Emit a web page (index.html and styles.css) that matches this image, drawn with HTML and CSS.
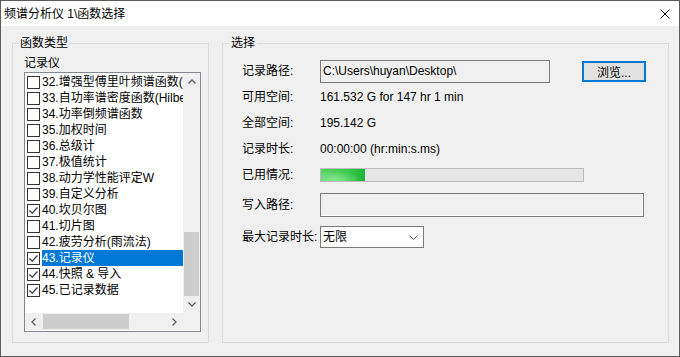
FILE: index.html
```html
<!DOCTYPE html>
<html lang="zh">
    <head>
        <meta charset="UTF-8">
        <title>频谱分析仪 1\函数选择</title>
        <link rel="stylesheet" href="styles.css">
    </head>
    <body>
        <div class="window">
            <div class="titlebar">
                <span class="title">频谱分析仪 1\函数选择</span>
                <svg class="close" width="10" height="10" viewBox="0 0 10 10">
                    <path d="M0.5 0.5 L9.5 9.5 M9.5 0.5 L0.5 9.5" stroke="#000" stroke-width="1" fill="none"/>
                </svg>
            </div>

            <div class="content">
                <!--left group-->
                <fieldset class="group group-left">
                    <legend>函数类型</legend>
                    <div class="list-label">记录仪</div>
                    <div class="listbox">
                        <div class="list-main">
                            <div class="rows">
                                <div class="item"><span class="check"></span><span class="text">32.增强型傅里叶频谱函数(Hilbert)</span></div>
                                <div class="item"><span class="check"></span><span class="text">33.自功率谱密度函数(Hilbert)</span></div>
                                <div class="item"><span class="check"></span><span class="text">34.功率倒频谱函数</span></div>
                                <div class="item"><span class="check"></span><span class="text">35.加权时间</span></div>
                                <div class="item"><span class="check"></span><span class="text">36.总级计</span></div>
                                <div class="item"><span class="check"></span><span class="text">37.极值统计</span></div>
                                <div class="item"><span class="check"></span><span class="text">38.动力学性能评定W</span></div>
                                <div class="item"><span class="check"></span><span class="text">39.自定义分析</span></div>
                                <div class="item"><span class="check checked"><svg width="11" height="11" viewBox="0 0 11 11"><path d="M1.5 5.5 L4.2 8.2 L9.5 2.5" stroke="#333" stroke-width="1.2" fill="none"/></svg></span><span class="text">40.坎贝尔图</span></div>
                                <div class="item"><span class="check"></span><span class="text">41.切片图</span></div>
                                <div class="item"><span class="check"></span><span class="text">42.疲劳分析(雨流法)</span></div>
                                <div class="item selected"><span class="check checked"><svg width="11" height="11" viewBox="0 0 11 11"><path d="M1.5 5.5 L4.2 8.2 L9.5 2.5" stroke="#333" stroke-width="1.2" fill="none"/></svg></span><span class="text">43.记录仪</span></div>
                                <div class="item"><span class="check checked"><svg width="11" height="11" viewBox="0 0 11 11"><path d="M1.5 5.5 L4.2 8.2 L9.5 2.5" stroke="#333" stroke-width="1.2" fill="none"/></svg></span><span class="text">44.快照 &amp; 导入</span></div>
                                <div class="item"><span class="check checked"><svg width="11" height="11" viewBox="0 0 11 11"><path d="M1.5 5.5 L4.2 8.2 L9.5 2.5" stroke="#333" stroke-width="1.2" fill="none"/></svg></span><span class="text">45.已记录数据</span></div>
                            </div>
                            <div class="vscroll">
                                <div class="sb-btn"><svg width="8" height="5" viewBox="0 0 8 5"><path d="M0.5 4.5 L4 1 L7.5 4.5" stroke="#606060" stroke-width="1.3" fill="none"/></svg></div>
                                <div class="vtrack"><div class="vthumb"></div></div>
                                <div class="sb-btn"><svg width="8" height="5" viewBox="0 0 8 5"><path d="M0.5 0.5 L4 4 L7.5 0.5" stroke="#606060" stroke-width="1.3" fill="none"/></svg></div>
                            </div>
                        </div>
                        <div class="hscroll">
                            <div class="hbar">
                                <div class="sb-btn"><svg width="5" height="8" viewBox="0 0 5 8"><path d="M4.5 0.5 L1 4 L4.5 7.5" stroke="#606060" stroke-width="1.3" fill="none"/></svg></div>
                                <div class="htrack"><div class="hthumb"></div></div>
                                <div class="sb-btn"><svg width="5" height="8" viewBox="0 0 5 8"><path d="M0.5 0.5 L4 4 L0.5 7.5" stroke="#606060" stroke-width="1.3" fill="none"/></svg></div>
                            </div>
                            <div class="corner"></div>
                        </div>
                    </div>
                </fieldset>

                <!--right group-->
                <fieldset class="group group-right">
                    <legend>选择</legend>
                    <div class="form">
                        <div class="label">记录路径:</div>
                        <div class="value path-row">
                            <div class="field path-field">C:\Users\huyan\Desktop\</div>
                            <button class="browse">浏览...</button>
                        </div>

                        <div class="label">可用空间:</div>
                        <div class="value">161.532 G for 147 hr 1 min</div>

                        <div class="label">全部空间:</div>
                        <div class="value">195.142 G</div>

                        <div class="label">记录时长:</div>
                        <div class="value">00:00:00 (hr:min:s.ms)</div>

                        <div class="label">已用情况:</div>
                        <div class="value">
                            <div class="progress"><div class="progress-fill" style="width: 44px"></div></div>
                        </div>

                        <div class="label">写入路径:</div>
                        <div class="value"><div class="field write-field"></div></div>

                        <div class="label">最大记录时长:</div>
                        <div class="value">
                            <div class="combo">
                                <span>无限</span>
                                <svg width="9" height="5" viewBox="0 0 9 5"><path d="M0.5 0.5 L4.5 4.5 L8.5 0.5" stroke="#555" stroke-width="1" fill="none"/></svg>
                            </div>
                        </div>
                    </div>
                </fieldset>
            </div>
        </div>
    </body>
</html>
```

FILE: styles.css
```css
*{
    box-sizing: border-box;
}
html, body{
    margin: 0;
    padding: 0;
}
body{
    font-family: "Liberation Sans", "Noto Sans CJK SC", sans-serif;
    font-size: 12px;
    color: #000;
    background: #f0f0f0;
}
.window{
    width: 680px;
    height: 357px;
    border: 1px solid #5c5c5c;
    background: #f0f0f0;
    display: flex;
    flex-direction: column;
}
.titlebar{
    height: 25px;
    flex: none;
    background: #fff;
    display: flex;
    align-items: center;
    justify-content: space-between;
    padding: 0 9px 0 3px;
}
.title{
    line-height: 16px;
}
.content{
    display: flex;
    gap: 13px;
    padding: 9px 10px 0 11px;
}
.group{
    margin: 0;
    padding: 0;
    border: 1px solid #dcdcdc;
    height: 308px;
    min-width: 0;
}
.group legend{
    padding: 0 2px;
    line-height: 16px;
}
.group-left{
    width: 197px;
}
.group-left legend{
    margin-left: 5px;
}
.group-right{
    width: 447px;
}
.group-right legend{
    margin-left: 6px;
}

/* list box */
.list-label{
    margin: 4px 0 0 11px;
    line-height: 16px;
}
.listbox{
    margin: 1px 0 0 11px;
    width: 177px;
    height: 260px;
    border: 1px solid #828790;
    background: #fff;
}
.list-main{
    display: flex;
    height: 240px;
}
.rows{
    flex: 1;
    padding-top: 1px;
    overflow: hidden;
}
.item{
    display: flex;
    align-items: center;
    height: 16px;
    padding-left: 2px;
    white-space: nowrap;
}
.check{
    flex: none;
    width: 13px;
    height: 13px;
    border: 1px solid #333;
    background: #fff;
    margin-right: 2px;
    display: flex;
    align-items: center;
    justify-content: center;
}
.text{
    flex: 1;
    line-height: 16px;
    height: 16px;
    overflow: hidden;
}
.selected .text{
    background: #0078d7;
    color: #fff;
}
.vscroll{
    width: 17px;
    flex: none;
    background: #f0f0f0;
    display: flex;
    flex-direction: column;
}
.sb-btn{
    flex: none;
    width: 17px;
    height: 17px;
    display: flex;
    align-items: center;
    justify-content: center;
}
.vtrack{
    flex: 1;
    display: flex;
    flex-direction: column;
    justify-content: flex-end;
}
.vthumb{
    height: 64px;
    margin: 0 1px;
    background: #cdcdcd;
}
.hscroll{
    display: flex;
    height: 17px;
}
.hbar{
    flex: 1;
    display: flex;
    background: #f0f0f0;
}
.htrack{
    flex: 1;
    padding: 1px 0 1px 1px;
}
.hthumb{
    width: 86px;
    height: 100%;
    background: #cdcdcd;
}
.corner{
    width: 17px;
    background: #f0f0f0;
}

/* form */
.form{
    display: grid;
    grid-template-columns: 78px 1fr;
    grid-template-rows: 26px 26px 26px 26px 26px 34px 30px;
    align-items: center;
    margin-top: 7px;
    padding-left: 19px;
}
.label, .value{
    line-height: 16px;
}
.path-row{
    display: flex;
    align-items: center;
}
.field{
    border: 1px solid #7a7a7a;
    background: #f0f0f0;
    padding-left: 2px;
}
.path-field{
    width: 230px;
    height: 23px;
    line-height: 21px;
}
.write-field{
    width: 324px;
    height: 24px;
    box-shadow: inset -1px -1px 0 #fff;
}
.browse{
    margin-left: 32px;
    width: 64px;
    height: 21px;
    padding: 0;
    font-family: inherit;
    font-size: 12px;
    color: #000;
    background: #e1e1e1;
    border: 2px solid #0078d7;
}
.progress{
    width: 264px;
    height: 14px;
    border: 1px solid #bcbcbc;
    background: #e6e6e6;
}
.progress-fill{
    height: 100%;
    background:
        radial-gradient(ellipse at 30% 90%, rgba(160,240,170,0.7), rgba(160,240,170,0) 60%),
        linear-gradient(to right, #5ad466, #3cc84f 60%, #1cb637);
}
.combo{
    width: 104px;
    height: 22px;
    border: 1px solid #7a7a7a;
    background: #fff;
    display: flex;
    align-items: center;
    justify-content: space-between;
    padding: 0 5px 0 2px;
}
```
